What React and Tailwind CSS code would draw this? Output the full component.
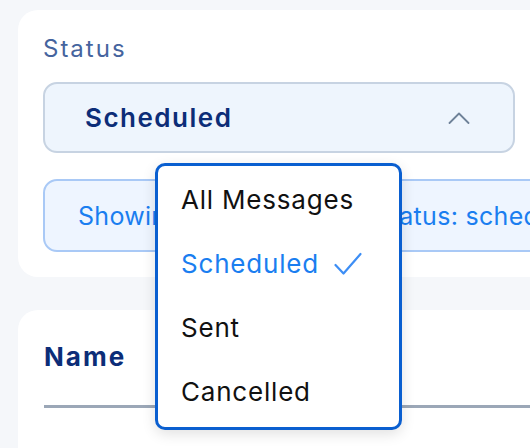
import { useState } from 'react';

const options = ['All Messages', 'Scheduled', 'Sent', 'Cancelled'];

export default function App() {
  const [status, setStatus] = useState('Scheduled');
  const [open, setOpen] = useState(true);

  return (
    <div className="w-[530px] h-[448px] overflow-hidden bg-[#f5f7fa] pl-[18px] pt-[10px]" style={{ fontFamily: 'Inter, "Open Sans", sans-serif' }}>
      {/* filter card */}
      <div className="w-[560px] bg-white rounded-[20px] pl-[25px] pt-[25px] pb-[25px]">
        <div className="text-[24px] leading-[28px] tracking-[2px] text-[#45649e] h-[28px]">Status</div>
        <div className="relative mt-[19px]">
          <button
            onClick={() => setOpen(!open)}
            className="w-[472px] h-[71px] flex items-center justify-between pl-[40px] pr-[43px] bg-[#eef5fd] border-2 border-[#c7d3e2] rounded-[14px] text-[26px] leading-[30px] font-semibold tracking-[1.5px] text-[#0c2d78]"
          >
            <span>{status}</span>
            <svg width="22" height="12" viewBox="0 0 22 12" fill="none">
              <path d="M1.5 11 L11 1.5 L20.5 11" stroke="#6f8299" strokeWidth="1.8" strokeLinecap="round" strokeLinejoin="round" />
            </svg>
          </button>

          {open && (
            <div className="absolute left-[112px] top-[81px] z-10 w-[247px] h-[267px] bg-white border-[3px] border-[#0a5fd0] rounded-[10px] shadow-[0_4px_14px_rgba(0,0,0,0.12)] pt-[2px]">
              {options.map((o) => (
                <div
                  key={o}
                  onClick={() => { setStatus(o); setOpen(false); }}
                  className={`h-[64px] flex items-center pl-[23px] text-[26px] leading-[30px] tracking-[0.8px] ${o === status ? 'text-[#1a7ef0]' : 'text-[#111111]'}`}
                >
                  {o}
                  {o === status && (
                    <svg className="ml-[15px]" width="28" height="24" viewBox="0 0 28 24" fill="none">
                      <path d="M1.5 13 L9.5 21.5 L26.5 2" stroke="#3d8ef5" strokeWidth="2.2" strokeLinecap="round" strokeLinejoin="round" />
                    </svg>
                  )}
                </div>
              ))}
            </div>
          )}
        </div>

        <div className="mt-[26px] h-[73px] flex items-center pl-[33px] bg-[#eef5ff] border-2 border-[#a9c9f6] rounded-[14px] text-[25px] leading-[30px] tracking-[0.3px] text-[#1a7ef0] whitespace-nowrap">
          Showing messages with status: {status.toLowerCase()}
        </div>
      </div>

      {/* table card */}
      <div className="mt-[33px] w-[560px] h-[200px] bg-white rounded-[20px] pl-[26px] pt-[32px]">
        <div className="text-[26px] leading-[30px] font-bold tracking-[2px] text-[#0c2d78]">Name</div>
        <div className="mt-[33px] h-[2.5px] bg-[#9ba7b7]" />
      </div>
    </div>
  );
}
